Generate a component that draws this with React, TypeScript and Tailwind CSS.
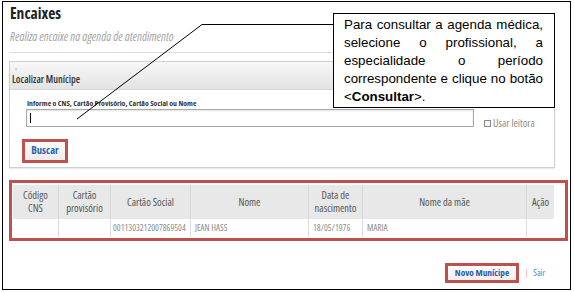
import React from "react";

const cols = "grid grid-cols-[46px_52px_80px_118px_54px_164px_27px]";

export default function App() {
  return (
    <div className="relative w-[574px] h-[292px] overflow-hidden bg-white font-['Open_Sans',sans-serif] font-stretch-condensed">
      <div className="ml-[2px] mt-[1px] w-[569px] h-[289px] border border-black flex flex-col">
        <h1 className="ml-[7px] h-[22px] leading-[22px] text-[15.5px] font-bold text-[#222]">Encaixes</h1>
        <p className="ml-[7px] mt-[7px] h-[12px] leading-[12px] text-[12px] italic text-[#a3a3a3]">
          Realiza encaixe na agenda de atendimento
        </p>
        <div className="ml-[6px] mt-[9px] w-[546px] h-px bg-[#dddddd]" />

        <section className="ml-[6px] mt-[8px] w-[546px] h-[107px] border border-[#cfcfcf] flex flex-col shadow-[0_1px_1px_rgba(0,0,0,0.08)]">
          <div className="h-[28px] bg-gradient-to-b from-[#f8f8f8] to-[#e3e3e3] border-b border-[#d6d6d6] flex flex-col">
            <div className="h-[11px] leading-[11px] pl-[5px] pt-[1px] text-[7px] text-[#9a9a9a]">›</div>
            <div className="h-[12px] leading-[12px] pl-[2px] text-[10px] font-semibold text-[#333]">Localizar Munícipe</div>
          </div>
          <div className="flex flex-col">
            <label className="mt-[8px] ml-[17px] h-[10px] leading-[10px] text-[7.8px] font-bold text-[#333]">
              Informe o CNS, Cartão Provisório, Cartão Social ou Nome
            </label>
            <div className="mt-[1px] ml-[16px] flex items-start">
              <div className="w-[448px] h-[18px] border border-[#a8a8a8] bg-white shadow-[inset_0_1px_2px_rgba(0,0,0,0.12)] flex items-center pl-[3px]">
                <div className="w-px h-[10px] bg-black" />
              </div>
              <div className="ml-[10px] mt-[9px] flex items-center gap-[2px]">
                <div className="w-[7px] h-[7px] border border-[#8a8a8a] bg-[#f4f4f4]" />
                <span className="text-[10.5px] leading-[10px] text-[#8c8c8c]">Usar leitora</span>
              </div>
            </div>
            <div className="mt-[11px] ml-[12px] w-[46px] h-[24px] border-[3px] border-[#c0504d] bg-gradient-to-b from-[#fbfbfb] to-[#ececec] flex items-center justify-center">
              <span className="text-[10.5px] font-bold text-[#2a62b0]">Buscar</span>
            </div>
          </div>
        </section>

        <div className="ml-[6px] mt-[12px] w-[559px] h-[61px] border-[3px] border-[#c0504d]">
          <div className="ml-[1px] mt-[2px] w-[541px]">
            <div className={`${cols} h-[34px] bg-[#e8e8e8] text-[10.5px] leading-[13px] text-[#555]`}>
              <div className="border-r border-[#d6d6d6] flex items-center justify-center text-center">Código<br />CNS</div>
              <div className="border-r border-[#d6d6d6] flex items-center justify-center text-center">Cartão<br />provisório</div>
              <div className="border-r border-[#d6d6d6] flex items-center justify-center">Cartão Social</div>
              <div className="border-r border-[#d6d6d6] flex items-center justify-center">Nome</div>
              <div className="border-r border-[#d6d6d6] flex items-center justify-center text-center">Data de<br />nascimento</div>
              <div className="border-r border-[#d6d6d6] flex items-center justify-center">Nome da mãe</div>
              <div className="flex items-center justify-center">Ação</div>
            </div>
            <div className={`${cols} h-[18px] text-[9px] leading-[18px] text-[#8a8a8a]`}>
              <div className="border-r border-[#dcdcdc]" />
              <div className="border-r border-[#dcdcdc]" />
              <div className="border-r border-[#dcdcdc] pl-[2px]">0011303212007869504</div>
              <div className="border-r border-[#dcdcdc] pl-[4px]">JEAN HASS</div>
              <div className="border-r border-[#dcdcdc] pl-[4px]">18/05/1976</div>
              <div className="border-r border-[#dcdcdc] pl-[4px]">MARIA</div>
              <div />
            </div>
          </div>
        </div>

        <div className="mt-[22px] ml-[442px] flex items-center">
          <div className="w-[74px] h-[20px] border-[3px] border-[#c0504d] bg-gradient-to-b from-white to-[#eeeeee] flex items-center justify-center">
            <span className="text-[9.3px] font-bold text-[#2a5aa8]">Novo Munícipe</span>
          </div>
          <span className="ml-[6px] text-[8px] text-[#e39a9a]">|</span>
          <span className="ml-[5px] text-[9px] text-[#4f7fc0]">Sair</span>
        </div>
      </div>

      <svg className="absolute left-0 top-0 pointer-events-none" width="574" height="292">
        <polyline points="77,119 202,24.5 333,24.5" fill="none" stroke="#000" strokeWidth="1" />
      </svg>

      <div className="absolute left-[333px] top-[13px] w-[222px] h-[95px] border border-black bg-white pl-[10px] pr-[11px] pt-[2px] font-['Liberation_Sans',Arial,sans-serif] font-stretch-normal text-[13.33px] leading-[18px] text-black">
        <div className="text-justify [text-align-last:justify]">Para consultar a agenda médica,</div>
        <div className="text-justify [text-align-last:justify]">selecione o profissional, a</div>
        <div className="text-justify [text-align-last:justify]">especialidade o período</div>
        <div className="text-justify [text-align-last:justify]">correspondente e clique no botão</div>
        <div>&lt;<b>Consultar</b>&gt;.</div>
      </div>
    </div>
  );
}
